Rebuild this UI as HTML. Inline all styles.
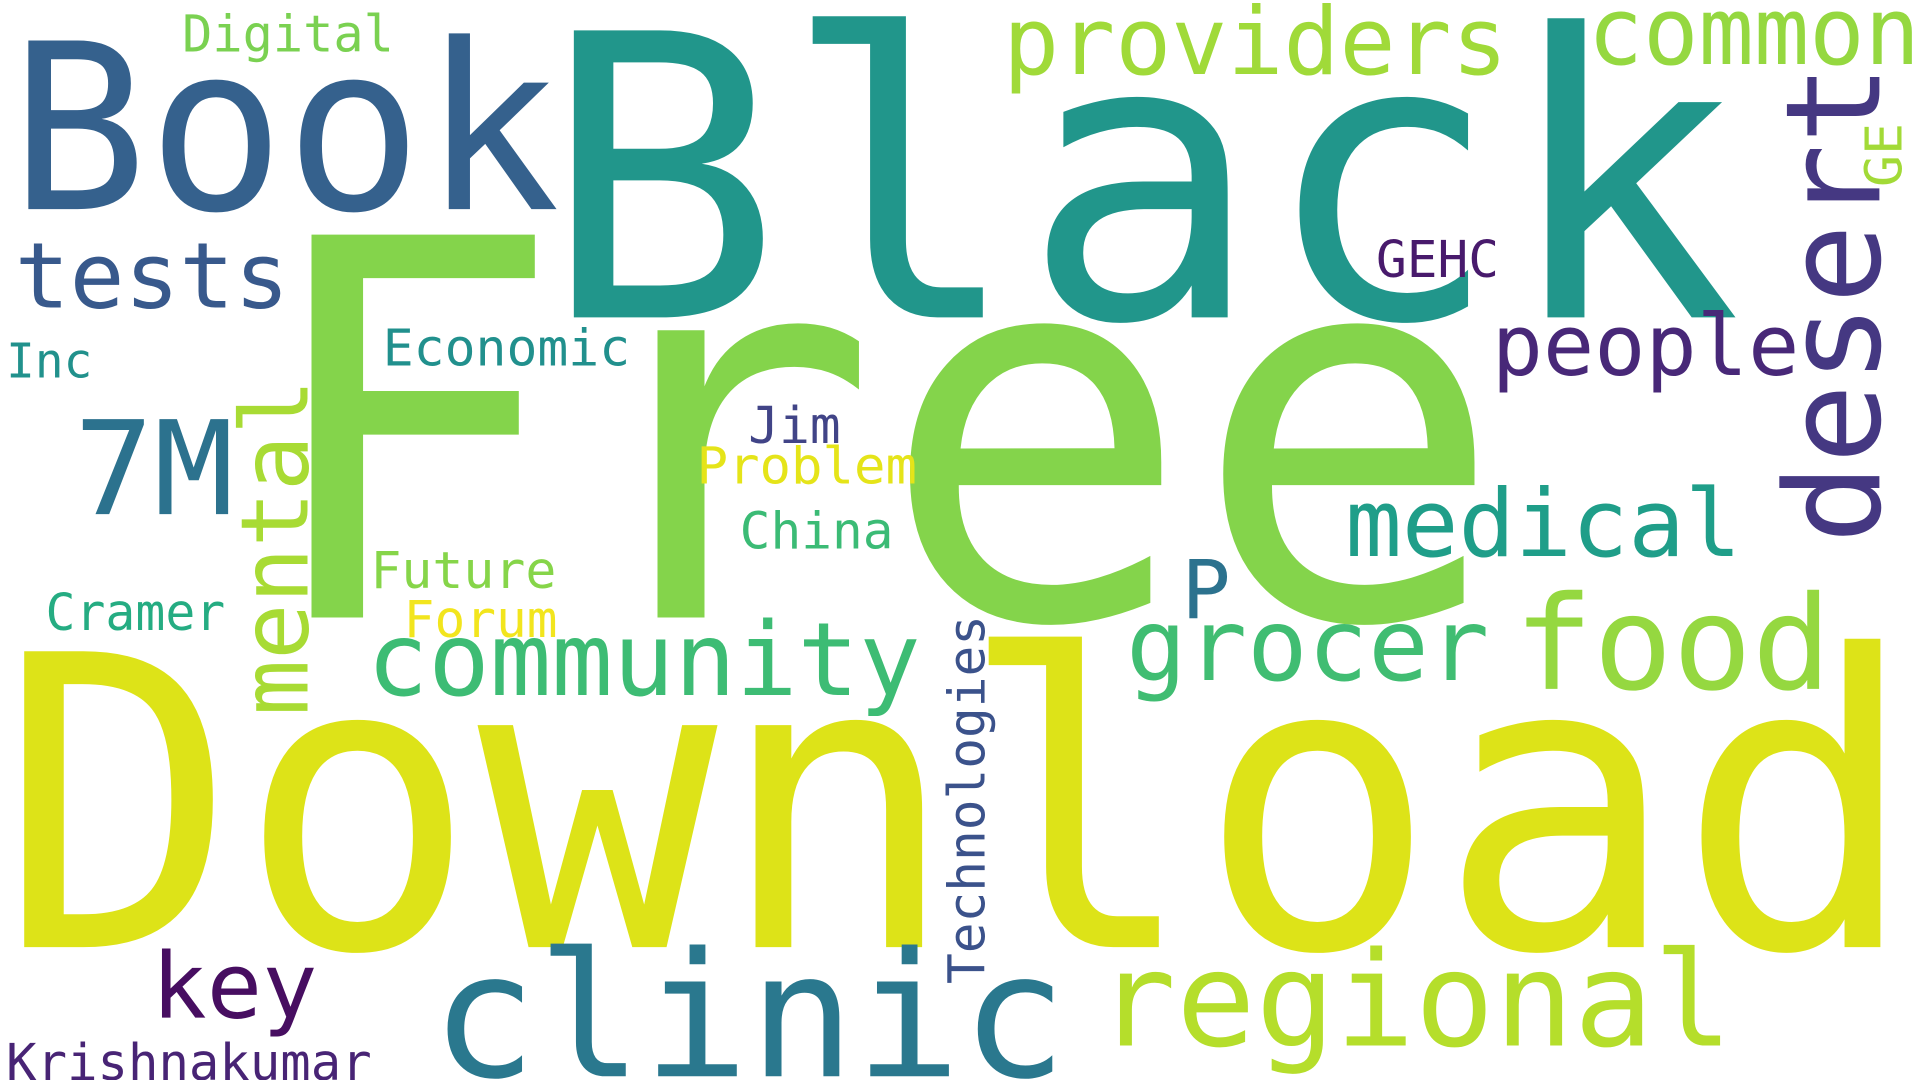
<!DOCTYPE html>
<html><head><meta charset="utf-8"><style>
html,body{margin:0;padding:0;background:#fff;width:1920px;height:1080px;overflow:hidden}
svg{display:block}
text{font-family:"DejaVu Sans Mono","Liberation Mono",monospace}
</style></head><body>
<svg width="1920" height="1080" viewBox="0 0 1560 878" preserveAspectRatio="none" xmlns="http://www.w3.org/2000/svg">
<rect width="1560" height="878" fill="#fff"/>
<text x="205" y="502" font-size="427" fill="#84d44b" textLength="1018" lengthAdjust="spacingAndGlyphs">Free</text>
<text x="440" y="258" font-size="320" fill="#21968b" textLength="975" lengthAdjust="spacingAndGlyphs">Black</text>
<text x="-2" y="770" font-size="330" fill="#dde318" textLength="1560" lengthAdjust="spacingAndGlyphs">Download</text>
<text x="8" y="170" font-size="188" fill="#35618d" textLength="447" lengthAdjust="spacingAndGlyphs">Book</text>
<text x="148" y="42" font-size="41" fill="#7ad151" textLength="172" lengthAdjust="spacingAndGlyphs">Digital</text>
<text x="12" y="250" font-size="74" fill="#38598c" textLength="223" lengthAdjust="spacingAndGlyphs">tests</text>
<text x="5" y="307" font-size="39" fill="#21918c" textLength="70" lengthAdjust="spacingAndGlyphs">Inc</text>
<text x="60" y="418" font-size="106" fill="#2c728e" textLength="130" lengthAdjust="spacingAndGlyphs">7M</text>
<text transform="translate(250,582) rotate(-90)" font-size="76" fill="#a8db34" textLength="274" lengthAdjust="spacingAndGlyphs">mental</text>
<text x="311" y="297" font-size="41" fill="#21908d" textLength="201" lengthAdjust="spacingAndGlyphs">Economic</text>
<text x="37" y="512" font-size="41" fill="#25ac82" textLength="146" lengthAdjust="spacingAndGlyphs">Cramer</text>
<text x="301" y="478" font-size="41" fill="#86d549" textLength="151" lengthAdjust="spacingAndGlyphs">Future</text>
<text x="328" y="518" font-size="41" fill="#f2e51d" textLength="125" lengthAdjust="spacingAndGlyphs">Forum</text>
<text x="815" y="60" font-size="76" fill="#a0da39" textLength="410" lengthAdjust="spacingAndGlyphs">providers</text>
<text x="1290" y="52" font-size="76" fill="#95d840" textLength="270" lengthAdjust="spacingAndGlyphs">common</text>
<text transform="translate(1527,442) rotate(-90)" font-size="107" fill="#453882" textLength="390" lengthAdjust="spacingAndGlyphs">desert</text>
<text transform="translate(1545,152) rotate(-90)" font-size="41" fill="#a2da37" textLength="52" lengthAdjust="spacingAndGlyphs">GE</text>
<text x="1118" y="225" font-size="41" fill="#481a6c" textLength="100" lengthAdjust="spacingAndGlyphs">GEHC</text>
<text x="1212" y="305" font-size="69" fill="#482878" textLength="250" lengthAdjust="spacingAndGlyphs">people</text>
<text x="608" y="360" font-size="41" fill="#414487" textLength="75" lengthAdjust="spacingAndGlyphs">Jim</text>
<text x="566" y="393" font-size="41" fill="#e5e419" textLength="179" lengthAdjust="spacingAndGlyphs">Problem</text>
<text x="601" y="446" font-size="41" fill="#3bbb75" textLength="125" lengthAdjust="spacingAndGlyphs">China</text>
<text x="1093" y="452" font-size="76" fill="#1f9e89" textLength="322" lengthAdjust="spacingAndGlyphs">medical</text>
<text x="960" y="503" font-size="66" fill="#2c728e" textLength="40" lengthAdjust="spacingAndGlyphs">P</text>
<text x="298" y="565" font-size="83" fill="#3dbc74" textLength="450" lengthAdjust="spacingAndGlyphs">community</text>
<text x="915" y="553" font-size="81" fill="#40bd72" textLength="295" lengthAdjust="spacingAndGlyphs">grocer</text>
<text x="1230" y="560" font-size="106" fill="#95d840" textLength="258" lengthAdjust="spacingAndGlyphs">food</text>
<text transform="translate(800,800) rotate(-90)" font-size="41" fill="#3b528b" textLength="300" lengthAdjust="spacingAndGlyphs">Technologies</text>
<text x="123" y="827" font-size="74" fill="#470e61" textLength="135" lengthAdjust="spacingAndGlyphs">key</text>
<text x="350" y="875" font-size="141" fill="#2a788e" textLength="517" lengthAdjust="spacingAndGlyphs">clinic</text>
<text x="891" y="850" font-size="107" fill="#b5de2b" textLength="517" lengthAdjust="spacingAndGlyphs">regional</text>
<text x="5" y="878" font-size="41" fill="#482475" textLength="297" lengthAdjust="spacingAndGlyphs">Krishnakumar</text>
</svg>
</body></html>
